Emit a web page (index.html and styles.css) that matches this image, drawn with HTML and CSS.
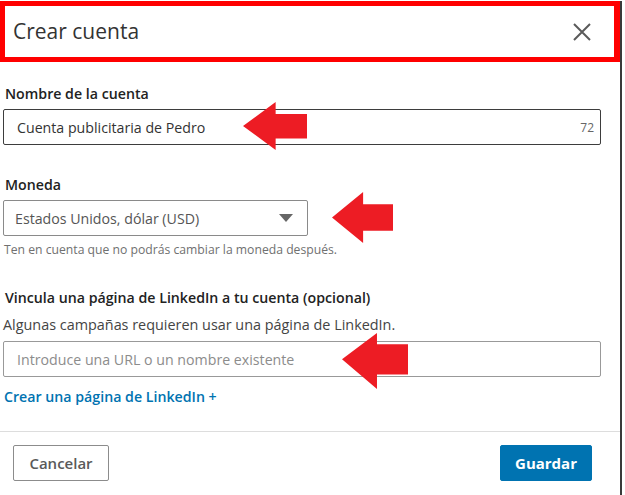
FILE: index.html
```html
<!DOCTYPE html>
<html lang="es">
<head>
    <meta charset="UTF-8">
    <meta name="viewport" content="width=device-width, initial-scale=1.0">
    <title>Crear cuenta</title>
    <link rel="stylesheet" href="styles.css">
</head>
<body>
    <div class="modal">
        <div class="modal-header">
            <h2 class="modal-title">Crear cuenta</h2>
            <svg class="close-icon" width="20" height="20" viewBox="0 0 20 20">
                <path d="M2 2 L18 18 M18 2 L2 18" stroke="#5a5a5a" stroke-width="2" fill="none"/>
            </svg>
        </div>

        <div class="modal-body">
            <div class="field field-name">
                <div class="field-label">Nombre de la cuenta</div>
                <div class="field-box">
                    <span class="field-value">Cuenta publicitaria de Pedro</span>
                    <span class="counter">72</span>
                </div>
            </div>

            <div class="field field-currency">
                <div class="field-label">Moneda</div>
                <div class="field-box select-box">
                    <span class="field-value muted">Estados Unidos, dólar (USD)</span>
                    <span class="caret"></span>
                </div>
                <div class="help-text">Ten en cuenta que no podrás cambiar la moneda después.</div>
            </div>

            <div class="field field-page">
                <div class="field-label">Vincula una página de LinkedIn a tu cuenta (opcional)</div>
                <div class="field-desc">Algunas campañas requieren usar una página de LinkedIn.</div>
                <div class="field-box light">
                    <span class="placeholder">Introduce una URL o un nombre existente</span>
                </div>
                <a class="create-link" href="#">Crear una página de LinkedIn +</a>
            </div>
        </div>

        <div class="modal-footer">
            <button class="btn btn-secondary">Cancelar</button>
            <button class="btn btn-primary">Guardar</button>
        </div>

        <!-- arrows drawn over the screenshot -->
        <svg class="arrow arrow-1" viewBox="0 0 100 100" preserveAspectRatio="none"><polygon points="0,50 51,0 51,25 100,25 100,76 51,76 51,100" /></svg>
        <svg class="arrow arrow-2" viewBox="0 0 100 100" preserveAspectRatio="none"><polygon points="0,50 51,0 51,24 100,24 100,76 51,76 51,100" /></svg>
        <svg class="arrow arrow-3" viewBox="0 0 100 100" preserveAspectRatio="none"><polygon points="0,47 53,0 53,20 100,20 100,74 53,74 53,100" /></svg>
    </div>
</body>
</html>
```

FILE: styles.css
```css
body {
    margin: 0;
    padding: 0;
    background-color: #ffffff;
    font-family: "Open Sans", "Liberation Sans", sans-serif;
    color: #333333;
}
.modal {
    position: relative;
    width: 620px;
    height: 495px;
    border-right: 2px solid #3a3a3a;
    box-sizing: content-box;
}
.modal-header {
    margin-top: 1px;
    height: 61px;
    box-sizing: border-box;
    border: 5px solid #ff0000;
    border-right-width: 6px;
    display: flex;
    align-items: center;
    justify-content: space-between;
    padding: 0 22px 0 8px;
}
.modal-title {
    margin: 0;
    font-family: "Open Sans", sans-serif;
    font-weight: normal;
    font-size: 21px;
    color: #333333;
    padding-bottom: 2px;
}
.close-icon {
    display: block;
}
.modal-body {
    padding: 0 19px 0 3px;
}
.field-label {
    font-size: 14.2px;
    line-height: 20px;
    font-weight: 600;
    color: #222222;
    padding-left: 2px;
    margin-bottom: 5px;
}
.field-name {
    padding-top: 22px;
}
.field-currency {
    padding-top: 30px;
}
.field-page {
    padding-top: 30px;
}
.field-box {
    height: 36px;
    box-sizing: border-box;
    border: 1px solid #3d3d3d;
    border-radius: 2px;
    display: flex;
    align-items: center;
    padding: 0 6px 0 13px;
    font-size: 14.2px;
}
.field-value {
    flex: 1;
    color: #333333;
}
.field-value.muted {
    color: #555555;
}
.counter {
    align-self: flex-end;
    margin-bottom: 8px;
    font-size: 12px;
    color: #666666;
}
.select-box {
    width: 305px;
    border-color: #8a8a8a;
    padding: 0 14px 0 11px;
}
.caret {
    width: 0;
    height: 0;
    border-left: 7px solid transparent;
    border-right: 7px solid transparent;
    border-top: 8px solid #666666;
}
.help-text {
    margin-top: 6px;
    font-size: 12.2px;
    line-height: 16px;
    color: #707070;
    padding-left: 1px;
}
.field-desc {
    font-size: 14.4px;
    line-height: 20px;
    color: #444444;
    margin-top: 7px;
    margin-bottom: 6px;
}
.field-box.light {
    border-color: #999999;
}
.placeholder {
    color: #8c8c8c;
}
.create-link {
    display: block;
    margin-top: 10px;
    font-size: 14.2px;
    line-height: 20px;
    font-weight: 600;
    color: #0073b1;
    text-decoration: none;
    padding-left: 1px;
}
.modal-footer {
    margin-top: 24px;
    border-top: 1px solid #dddddd;
    display: flex;
    justify-content: space-between;
    padding: 13px 28px 0 13px;
}
.btn {
    height: 36px;
    font-family: "Open Sans", "Liberation Sans", sans-serif;
    font-size: 15px;
    border-radius: 2px;
    cursor: pointer;
}
.btn-secondary {
    width: 96px;
    background: #ffffff;
    border: 1px solid #8c8c8c;
    color: #5a5a5a;
    font-weight: 600;
}
.btn-primary {
    width: 92px;
    background: #0073b1;
    border: 1px solid #0073b1;
    color: #ffffff;
    font-weight: bold;
}
.arrow {
    position: absolute;
    fill: #ed1c24;
}
.arrow-1 {
    left: 243px;
    top: 101px;
    width: 64px;
    height: 48px;
}
.arrow-2 {
    left: 332px;
    top: 191px;
    width: 61px;
    height: 51px;
}
.arrow-3 {
    left: 342px;
    top: 332px;
    width: 66px;
    height: 56px;
}
```
